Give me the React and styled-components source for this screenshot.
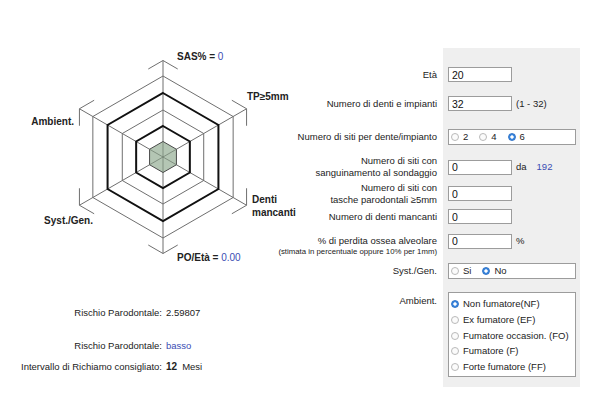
import styled, { createGlobalStyle, css } from 'styled-components';

const GlobalStyle = createGlobalStyle`
  html, body {
    margin: 0;
    padding: 0;
    background: #fff;
  }
  body {
    font-family: "Liberation Sans", Arial, sans-serif;
    color: #222;
  }
`;

const BLUE = '#3a4db3';

// radar chart geometry
const CX = 163;
const CY = 157;
const OUTER = 96.5;
const ARM = 17;
const rings = [
  { r: 81, thick: false },
  { r: 64, thick: true },
  { r: 47, thick: false },
  { r: 31, thick: true },
];

const pt = (r, i) => {
  const a = ((-90 + 60 * i) * Math.PI) / 180;
  return [CX + r * Math.cos(a), CY + r * Math.sin(a)];
};
const hex = (r) => [0, 1, 2, 3, 4, 5].map((i) => pt(r, i).join(',')).join(' ');
const bracket = (i) => {
  const [vx, vy] = pt(OUTER, i);
  const arm = (j) => {
    const [nx, ny] = pt(OUTER, j);
    const k = ARM / OUTER;
    return `${vx + (nx - vx) * k},${vy + (ny - vy) * k}`;
  };
  return `M${arm(i - 1)} L${vx},${vy} L${arm(i + 1)}`;
};

const Chart = () => (
  <ChartSvg width="262" height="270" viewBox="0 0 262 270">
    {[0, 1, 2, 3, 4, 5].map((i) => {
      const [x, y] = pt(OUTER, i);
      return <line key={`s${i}`} className="thin" x1={CX} y1={CY} x2={x} y2={y} />;
    })}
    {[0, 1, 2, 3, 4, 5].map((i) => (
      <path key={`b${i}`} className="thin" d={bracket(i)} />
    ))}
    {rings.map((ring) => (
      <polygon key={ring.r} className={ring.thick ? 'thick' : 'thin'} points={hex(ring.r)} />
    ))}
    <polygon className="area" points={hex(15.5)} />
    {[0, 1, 2, 3, 4, 5].map((i) => {
      const [x, y] = pt(15.5, i);
      return <line key={`c${i}`} className="inner" x1={CX} y1={CY} x2={x} y2={y} />;
    })}

    <text x="177" y="60">
      SAS% = <tspan className="val">0</tspan>
    </text>
    <text x="247" y="100">TP≥5mm</text>
    <text x="74" y="125" textAnchor="end">Ambient.</text>
    <text x="93" y="224" textAnchor="end">Syst./Gen.</text>
    <text x="252" y="202.5">Denti</text>
    <text x="252" y="215.5">mancanti</text>
    <text x="177" y="261">
      PO/Età = <tspan className="val">0.00</tspan>
    </text>
  </ChartSvg>
);

const Radio = ({ on, children }) => (
  <Option>
    <Dot $on={on} />
    {children}
  </Option>
);

const App = () => {
  return (
    <>
      <GlobalStyle />
      <Page>
        <Left>
          <Chart />
          <Results>
            <ResLabel>Rischio Parodontale:</ResLabel>
            <ResValue>2.59807</ResValue>
            <ResLabel>Rischio Parodontale:</ResLabel>
            <ResValue $blue>basso</ResValue>
            <ResLabel>Intervallo di Richiamo consigliato:</ResLabel>
            <ResValue>
              <b>12</b>
              <Unit>Mesi</Unit>
            </ResValue>
          </Results>
        </Left>

        <Form>
          <Panel />

          <Label $row={2}>Età</Label>
          <Field $row={2}>
            <Input readOnly value="20" />
          </Field>

          <Label $row={3}>Numero di denti e impianti</Label>
          <Field $row={3}>
            <Input readOnly value="32" />
            <span>(1 - 32)</span>
          </Field>

          <Label $row={4}>Numero di siti per dente/impianto</Label>
          <Field $row={4}>
            <RadioBox>
              <Radio>2</Radio>
              <Radio>4</Radio>
              <Radio on>6</Radio>
            </RadioBox>
          </Field>

          <Label $row={5}>
            Numero di siti con
            <br />
            sanguinamento al sondaggio
          </Label>
          <Field $row={5}>
            <Input readOnly value="0" />
            <span>da</span>
            <Count>192</Count>
          </Field>

          <Label $row={6}>
            Numero di siti con
            <br />
            tasche parodontali ≥5mm
          </Label>
          <Field $row={6}>
            <Input readOnly value="0" />
          </Field>

          <Label $row={7}>Numero di denti mancanti</Label>
          <Field $row={7}>
            <Input readOnly value="0" />
          </Field>

          <Label $row={8} $top={10.7}>
            % di perdita ossea alveolare
            <Note>(stimata in percentuale oppure 10% per 1mm)</Note>
          </Label>
          <Field $row={8}>
            <Input readOnly value="0" />
            <span>%</span>
          </Field>

          <Label $row={9}>Syst./Gen.</Label>
          <Field $row={9}>
            <RadioBox>
              <Radio>Si</Radio>
              <Radio on>No</Radio>
            </RadioBox>
          </Field>

          <Label $row={10} $top={10.7}>
            Ambient.
          </Label>
          <Field $row={10} $top={8.3}>
            <OptionBox>
              <Radio on>Non fumatore(NF)</Radio>
              <Radio>Ex fumatore (EF)</Radio>
              <Radio>Fumatore occasion. (FO)</Radio>
              <Radio>Fumatore (F)</Radio>
              <Radio>Forte fumatore (FF)</Radio>
            </OptionBox>
          </Field>
        </Form>
      </Page>
    </>
  );
};

const Page = styled.div`
  display: flex;
  width: 600px;
  height: 404px;
  overflow: hidden;
`;

const Left = styled.div`
  width: 262px;
  flex: none;
  display: flex;
  flex-direction: column;
`;

const ChartSvg = styled.svg`
  display: block;
  overflow: visible;

  .thin {
    fill: none;
    stroke: #6f6f6f;
    stroke-width: 1;
  }
  .thick {
    fill: none;
    stroke: #111;
    stroke-width: 2;
  }
  .area {
    fill: #b4c6b4;
    stroke: #4a4a4a;
    stroke-width: 1;
  }
  .inner {
    stroke: #6a786a;
    stroke-width: 0.7;
  }
  text {
    font-family: "Liberation Sans", Arial, sans-serif;
    font-size: 10px;
    font-weight: bold;
    fill: #222;
  }
  .val {
    font-weight: normal;
    fill: ${BLUE};
  }
`;

const Results = styled.div`
  display: grid;
  grid-template-columns: 162px auto;
  grid-template-rows: 32.4px 21.6px 12px;
  column-gap: 4px;
  margin-top: 37.3px;
  font-size: 9.5px;
  line-height: 12px;
`;

const ResLabel = styled.div`
  text-align: right;
  white-space: nowrap;
`;

const ResValue = styled.div`
  color: ${(p) => (p.$blue ? BLUE : '#222')};
  white-space: nowrap;

  b {
    font-size: 10px;
  }
`;

const Unit = styled.span`
  margin-left: 5px;
`;

const Form = styled.div`
  display: grid;
  grid-template-columns: 175px 137px;
  grid-template-rows: 12px 29px 29px 38px 22px 31px 15px 34px 26px 102.7px;
  column-gap: 6px;
  margin-top: 48px;
  align-self: flex-start;
  font-size: 9.5px;
  line-height: 12px;
`;

const Panel = styled.div`
  grid-column: 2;
  grid-row: 1 / -1;
  background: #efefef;
`;

const Label = styled.div`
  grid-column: 1;
  grid-row: ${(p) => p.$row};
  text-align: right;
  white-space: nowrap;
  align-self: ${(p) => (p.$top ? 'start' : 'center')};
  margin-top: ${(p) => p.$top || 0}px;
`;

const Note = styled.span`
  display: block;
  font-size: 7.8px;
  line-height: 10px;
`;

const Field = styled.div`
  grid-column: 2;
  grid-row: ${(p) => p.$row};
  display: flex;
  align-items: center;
  gap: 4px;
  padding-left: 5px;
  align-self: ${(p) => (p.$top ? 'start' : 'center')};
  margin-top: ${(p) => p.$top || 0}px;
  white-space: nowrap;
`;

const Input = styled.input`
  width: 64px;
  height: 15px;
  box-sizing: border-box;
  margin: 0;
  padding: 0 3px;
  border: 1px solid #9c9c9c;
  border-radius: 0;
  background: #fff;
  font-family: inherit;
  font-size: 10.5px;
  color: #111;
  outline: none;
`;

const Count = styled.span`
  margin-left: 6px;
  color: ${BLUE};
`;

const RadioBox = styled.div`
  width: 128px;
  height: 16px;
  box-sizing: border-box;
  display: flex;
  align-items: center;
  gap: 11px;
  padding-left: 2px;
  border: 1px solid #9c9c9c;
  background: #fff;
`;

const OptionBox = styled.div`
  width: 128px;
  height: 84.5px;
  box-sizing: border-box;
  display: flex;
  flex-direction: column;
  padding: 3px 0 0 2px;
  border: 1px solid #9c9c9c;
  background: #fff;

  & > label {
    height: 15.7px;
  }
`;

const Option = styled.label`
  display: flex;
  align-items: center;
  gap: 4px;
  font-size: 9.5px;
  color: #222;
`;

const Dot = styled.span`
  flex: none;
  width: 8px;
  height: 8px;
  box-sizing: border-box;
  border-radius: 50%;
  ${(p) =>
    p.$on
      ? css`
          background: radial-gradient(circle, #fff 0 1.4px, #3a86de 1.9px);
          border: 1px solid #2f74c8;
        `
      : css`
          background: #fbfbfb;
          border: 1px solid #b9b9b9;
        `}
`;

export default App;
